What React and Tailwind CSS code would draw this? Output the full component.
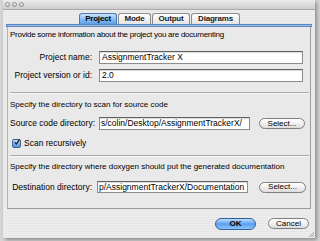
import React from 'react';

const stripes =
  'bg-[repeating-linear-gradient(to_bottom,#eeeeee_0px,#eeeeee_1px,#e6e6e6_1px,#e6e6e6_2px)]';

function Tab({ label, width, active }) {
  return (
    <div
      className={
        'h-full flex items-center justify-center rounded-t-[3px] border border-b-0 leading-none tracking-[-0.2px] ' +
        width +
        (active
          ? ' border-[#4f79b3] bg-gradient-to-b from-[#cfe4fb] via-[#88bdf3] to-[#5f9ee6] font-bold'
          : ' border-[#8c8c8c] bg-gradient-to-b from-[#ffffff] to-[#e4e4e4] font-bold text-[#1a1a1a]')
      }
    >
      {label}
    </div>
  );
}

function PillButton({ children, width, primary }) {
  return (
    <div
      className={
        'flex items-center justify-center rounded-full border leading-none ' +
        width +
        (primary
          ? ' h-[12px] border-[#355f9c] bg-gradient-to-b from-[#bcdcfc] via-[#5c9ff0] to-[#8cc4fb] font-bold'
          : ' h-[11px] border-[#7f7f7f] bg-gradient-to-b from-[#ffffff] via-[#f0f0f0] to-[#dcdcdc]')
      }
    >
      {children}
    </div>
  );
}

function TextField({ value, width, height = 'h-[13px]', pad = 'px-[2px]' }) {
  return (
    <div
      className={
        'flex items-center overflow-hidden whitespace-nowrap bg-white text-[8.5px] border border-[#8d8d8d] border-t-[#5f5f5f] shadow-[inset_0_1px_1px_rgba(0,0,0,0.15)] ' +
        pad +
        ' ' +
        width +
        ' ' +
        height
      }
    >
      {value}
    </div>
  );
}

function Label({ children }) {
  return <div className="w-[82px] text-right text-[8.5px] whitespace-nowrap">{children}</div>;
}

function Section({ children, tight }) {
  return (
    <div className={'leading-[10px] h-[10px] whitespace-nowrap' + (tight ? ' tracking-[-0.25px]' : '')}>
      {children}
    </div>
  );
}

export default function App() {
  return (
    <div className="w-[320px] h-[241px] overflow-hidden bg-[#d6d6d6] text-[8px] text-black font-['Liberation_Sans',Arial,sans-serif]">
      <div className="relative ml-[3px] w-[312px] h-[238px] flex flex-col bg-[#ececec] shadow-[2px_2px_4px_rgba(0,0,0,0.35)]">
        {/* Title bar */}
        <div className="h-[10px] flex items-center gap-[2px] pl-[2px] border-b border-[#a9a9a9] bg-gradient-to-b from-[#ebebeb] to-[#cdcdcd]">
          <span className="w-[5px] h-[5px] rounded-full border border-[#8f8f8f] bg-gradient-to-b from-[#f4f4f4] to-[#c8c8c8]" />
          <span className="w-[5px] h-[5px] rounded-full border border-[#8f8f8f] bg-gradient-to-b from-[#f4f4f4] to-[#c8c8c8]" />
          <span className="w-[5px] h-[5px] rounded-full border border-[#8f8f8f] bg-gradient-to-b from-[#f4f4f4] to-[#c8c8c8]" />
        </div>

        {/* Body */}
        <div className={'flex-1 flex flex-col px-[4px] pt-[3px] ' + stripes}>
          <div className="h-[11px] flex justify-center gap-[1px] pl-[1px]">
            <Tab label="Project" width="w-[38px]" active />
            <Tab label="Mode" width="w-[33px]" />
            <Tab label="Output" width="w-[38px]" />
            <Tab label="Diagrams" width="w-[49px]" />
          </div>
          <div className="-mx-[1px] h-[3px] border border-[#5f86bd] bg-gradient-to-b from-[#b7d6f8] to-[#6ea6e8]" />

          <div className="h-[182px] flex flex-col border-x border-b border-[#9c9c9c] border-l-[#b4b4b4] bg-[#e9e9e9] pl-[2px] pr-[1px] pt-[3px]">
            <Section tight>Provide some information about the project you are documenting</Section>

            <div className="mt-[11px] flex items-center gap-[7px]">
              <Label>Project name:</Label>
              <TextField value="AssignmentTracker X" width="w-[204px]" />
            </div>
            <div className="mt-[5px] flex items-center gap-[7px]">
              <Label>Project version or id:</Label>
              <TextField value="2.0" width="w-[204px]" />
            </div>

            <div className="mt-[10px] h-px bg-[#a8a8a8] border-b border-b-[#f8f8f8] box-content" />

            <div className="mt-[6px]">
              <Section>Specify the directory to scan for source code</Section>
            </div>
            <div className="mt-[7px] flex items-center">
              <Label>Source code directory:</Label>
              <div className="ml-[7px]">
                <TextField value="s/colin/Desktop/AssignmentTrackerX/" width="w-[151px]" pad="px-[1px]" />
              </div>
              <div className="ml-[9px]">
                <PillButton width="w-[46px]">Select...</PillButton>
              </div>
            </div>

            <div className="mt-[9px] h-[9px] flex items-center">
              <div className="ml-[2px] w-[9px] h-[9px] flex items-center justify-center rounded-[2px] border border-[#3f5f8f] bg-gradient-to-b from-[#b9d9fb] to-[#4f93e3]">
                <svg width="9" height="9" viewBox="0 0 9 9" className="-mt-[2px] ml-[1px]">
                  <path d="M1.5 4.5 L3.5 7 L8 0.5" fill="none" stroke="#111" strokeWidth="1.6" strokeLinecap="round" strokeLinejoin="round" />
                </svg>
              </div>
              <span className="ml-[3px] text-[8.5px]">Scan recursively</span>
            </div>

            <div className="mt-[7px] h-px bg-[#a8a8a8] border-b border-b-[#f8f8f8] box-content" />

            <div className="mt-[5px]">
              <Section>Specify the directory where doxygen should put the generated documentation</Section>
            </div>
            <div className="mt-[9px] flex items-center">
              <Label>Destination directory:</Label>
              <div className="ml-[5px]">
                <TextField value="p/AssignmentTrackerX/Documentation" width="w-[151px]" height="h-[12px]" pad="px-[1px]" />
              </div>
              <div className="ml-[11px]">
                <PillButton width="w-[47px]">Select...</PillButton>
              </div>
            </div>
          </div>

          <div className="mt-[9px] flex justify-end gap-[12px] pr-[2px]">
            <PillButton width="w-[41px]" primary>OK</PillButton>
            <PillButton width="w-[41px]">Cancel</PillButton>
          </div>
        </div>

        {/* Resize grip */}
        <svg width="6" height="6" viewBox="0 0 6 6" className="absolute right-[1px] bottom-[1px]">
          <path d="M6 1 L1 6 M6 3 L3 6 M6 5 L5 6" stroke="#9a9a9a" strokeWidth="0.8" />
        </svg>
      </div>
    </div>
  );
}
